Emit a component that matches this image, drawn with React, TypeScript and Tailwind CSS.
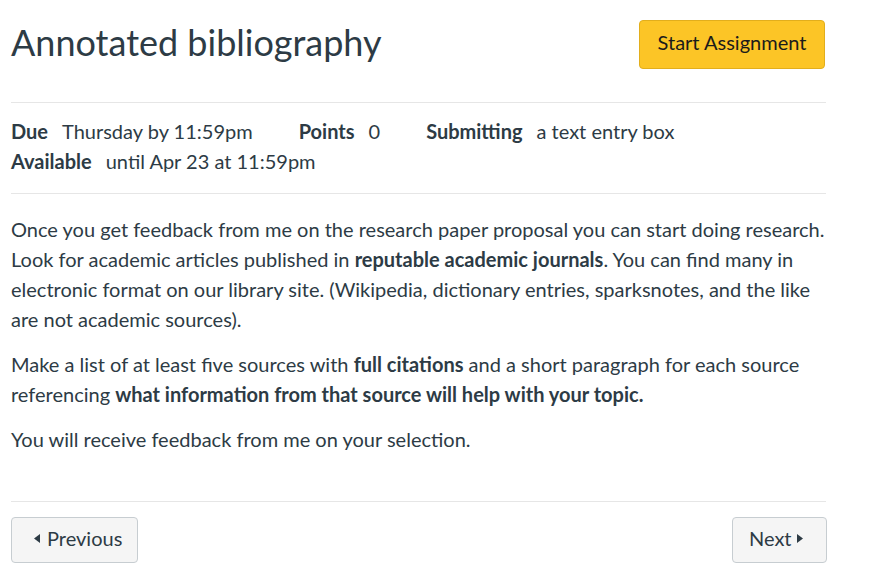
import React from "react";

function Caret({ dir }: { dir: "left" | "right" }) {
  return (
    <svg width="6" height="9" viewBox="0 0 6 9" className="shrink-0">
      {dir === "left" ? (
        <path d="M6 0 L0 4.5 L6 9 Z" fill="#2D3B45" />
      ) : (
        <path d="M0 0 L6 4.5 L0 9 Z" fill="#2D3B45" />
      )}
    </svg>
  );
}

function Meta({ label, value }: { label: string; value: string }) {
  return (
    <span className="mr-[46px] inline-flex items-baseline gap-[14px]">
      <span className="font-bold">{label}</span>
      <span>{value}</span>
    </span>
  );
}

export default function App() {
  return (
    <div
      className="min-h-[565px] bg-white pl-[11px] text-[#2D3B45]"
      style={{ fontFamily: "Lato, 'Open Sans', sans-serif" }}
    >
      <div className="w-[815px]">
        <header className="flex items-start justify-between border-b border-[#E6E6E6] pt-[20px] pb-[33px]">
          <h1 className="text-[36px] leading-[45px] font-normal">Annotated bibliography</h1>
          <button className="mr-[1px] h-[49px] w-[186px] rounded-[4px] border border-[#E2AE1C] bg-[#FCC526] pb-[6px] text-[20px] leading-[30px] text-[#1B1B1B]">
            Start Assignment
          </button>
        </header>

        <section className="border-b border-[#E6E6E6] pt-[13px] pb-[17px] text-[20px] leading-[30px]">
          <div className="flex">
            <Meta label="Due" value="Thursday by 11:59pm" />
            <Meta label="Points" value="0" />
            <Meta label="Submitting" value="a text entry box" />
          </div>
          <div className="flex">
            <Meta label="Available" value="until Apr 23 at 11:59pm" />
          </div>
        </section>

        <section className="flex flex-col gap-[15px] border-b border-[#E6E6E6] pt-[20px] pb-[47px] text-[20px] leading-[30px]">
          <p>
            Once you get feedback from me on the research paper proposal you can start doing research. Look for
            academic articles published in <strong className="font-bold">reputable academic journals</strong>. You can
            find many in electronic format on our library site. (Wikipedia, dictionary entries, sparksnotes, and the
            like are not academic sources).
          </p>
          <p>
            Make a list of at least five sources with <strong className="font-bold">full citations</strong> and a short
            paragraph for each source referencing{" "}
            <strong className="font-bold">what information from that source will help with your topic.</strong>
          </p>
          <p>You will receive feedback from me on your selection.</p>
        </section>

        <footer className="flex justify-between pt-[15px]">
          <button className="flex h-[46px] w-[127px] items-center gap-[7px] rounded-[4px] border border-[#C7CDD1] bg-[#F5F5F5] pb-[4px] pl-[22px] text-[20px] leading-[30px] text-[#2D3B45]">
            <Caret dir="left" />
            <span>Previous</span>
          </button>
          <button className="mr-[-1px] flex h-[46px] w-[95px] items-center gap-[5px] rounded-[4px] border border-[#C7CDD1] bg-[#F5F5F5] pb-[4px] pl-[16px] text-[20px] leading-[30px] text-[#2D3B45]">
            <span>Next</span>
            <Caret dir="right" />
          </button>
        </footer>
      </div>
    </div>
  );
}
